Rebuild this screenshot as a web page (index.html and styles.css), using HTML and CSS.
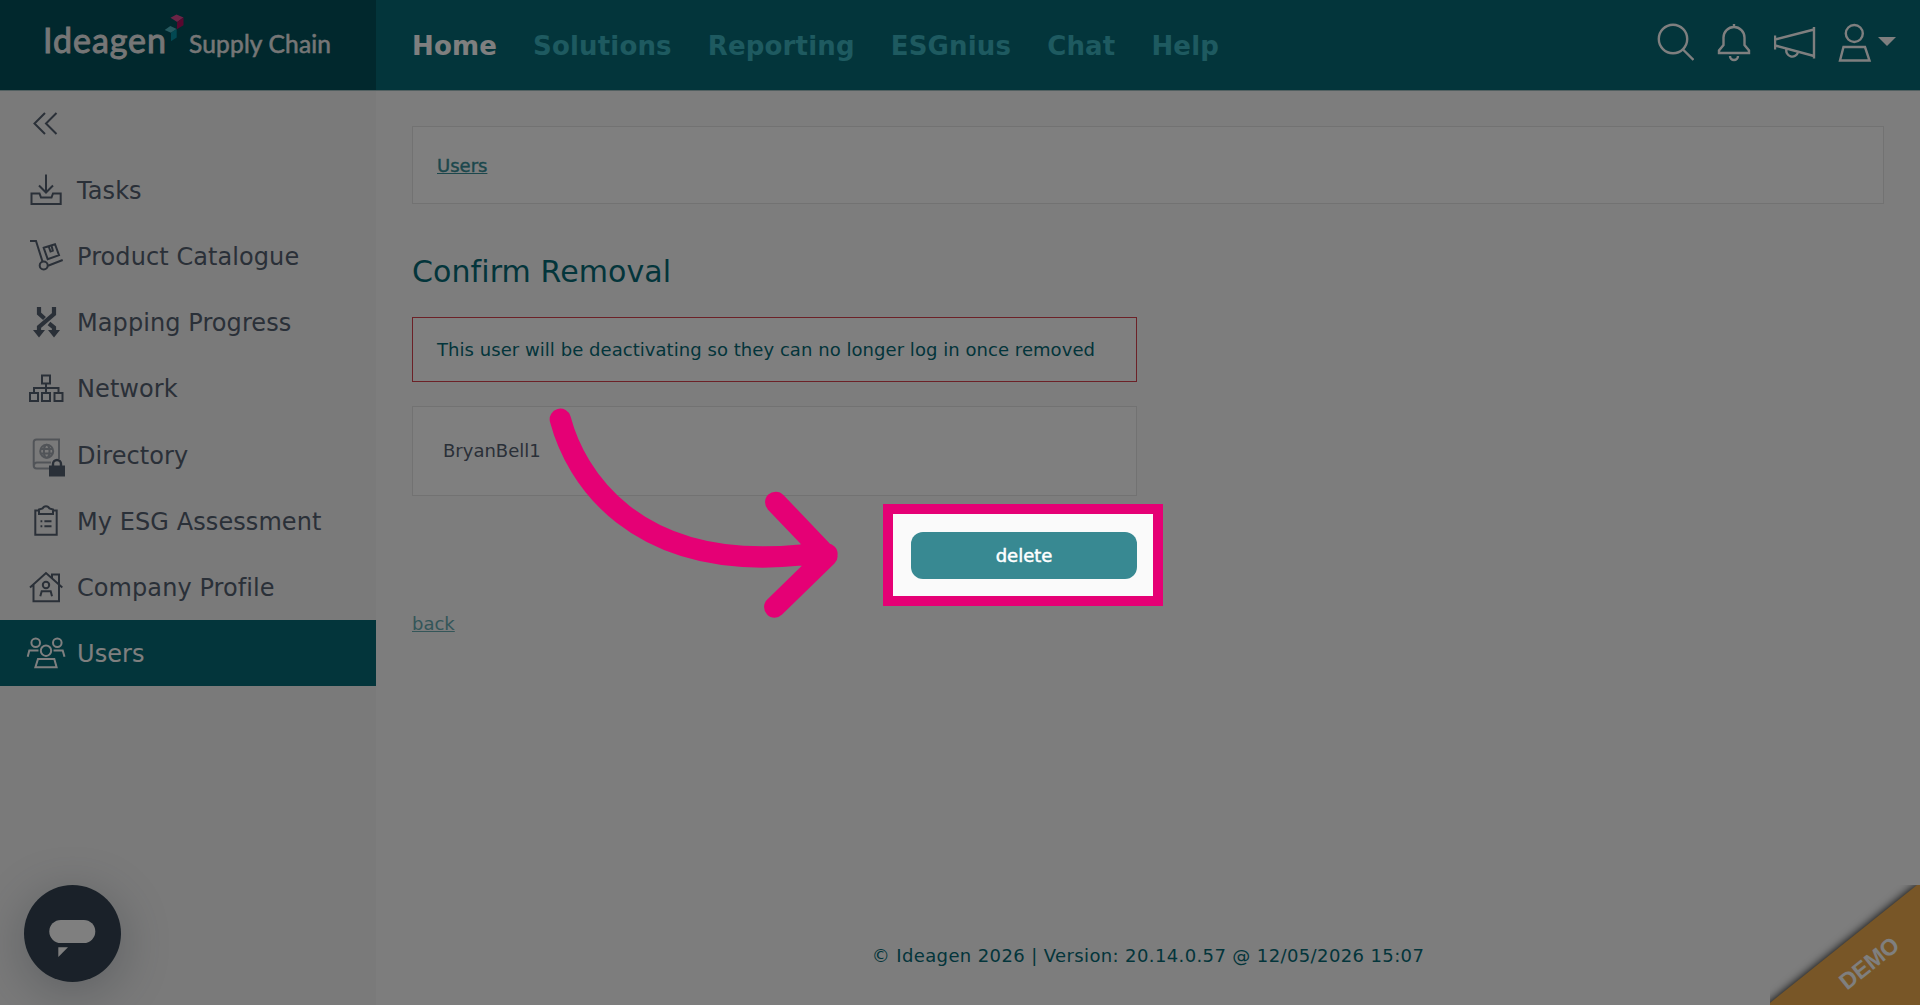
FILE: index.html
```html
<!DOCTYPE html>
<html lang="en">
<head>
    <meta charset="UTF-8">
    <meta name="viewport" content="width=device-width, initial-scale=1.0">
    <title>Confirm Removal</title>
    <link rel="stylesheet" href="styles.css">
</head>
<body>
    <header class="header">
        <a class="logo">
            <svg width="376" height="90" viewBox="0 0 376 90">
                <text class="logo-main" x="43" y="53" textLength="123">Ideagen</text>
                <text class="logo-sub" x="189" y="53" textLength="142">Supply Chain</text>
                <path fill="#d8488c" d="M170.500 17.700L176.500 14.500L183.500 17.500L177.200 22z"/>
                <path fill="#b0105f" d="M177.200 22L183.500 17.500V25.300L176.800 29.300z"/>
                <path fill="#4fb4c0" d="M164.700 30L170.300 26L176.700 29L171 32.700z"/>
                <path fill="#0590a4" d="M171 32.700L176.700 29V37.500L171 41.300z"/>
            </svg>
        </a>
        <nav class="nav">
            <a class="active">Home</a>
            <a>Solutions</a>
            <a>Reporting</a>
            <a>ESGnius</a>
            <a>Chat</a>
            <a>Help</a>
        </nav>
        <div class="tools">
            <svg width="40" height="40" viewBox="0 0 40 40"><circle cx="19" cy="17" r="14.200"/><path d="M29 27.500L39.500 38"/></svg>
            <svg width="40" height="40" viewBox="0 0 40 40"><path d="M20 2v4M5 31v-2.500l4.500-5.500v-7.500a10.500 10.500 0 0 1 21 0V23l4.500 5.500V31zM16 34a4 4 0 0 0 8 0"/></svg>
            <svg width="42" height="40" viewBox="0 0 42 40"><path d="M1 13.500v14M40 5v31.500M1 17.500L40 7.500M1 23.500L40 34M12.500 27a5.600 5.600 0 0 0 11.500 3.200"/></svg>
            <svg width="36" height="40" viewBox="0 0 36 40"><circle cx="18.300" cy="11.500" r="8.500"/><path d="M7.500 25h21.500l4.500 13.500H4z"/></svg>
            <svg class="caret" width="18" height="40" viewBox="0 0 18 40"><path d="M0 15h18l-9 9z"/></svg>
        </div>
    </header>

    <div class="page">
        <aside class="sidebar">
            <a class="item collapse">
                <svg viewBox="0 0 44 44"><path d="M21 11L10.500 21.500L21 32M32.500 11L22 21.500L32.500 32"/></svg>
            </a>
            <a class="item">
                <svg viewBox="0 0 44 44"><path d="M22 7.500V25M15 18.500L22 25.500L29 18.500M7.500 26.500H15.500L17 30.500H27.500L29 26.500H36.700V37H7.500z"/></svg>
                <span>Tasks</span>
            </a>
            <a class="item">
                <svg viewBox="0 0 44 44"><path d="M6 8H12L18.500 28.500M24 32.700L38.700 27M19.700 14.800L31 11.200L35 22.200L23.700 26.200zM24.700 13.500L26.500 18.500L28.800 17.600L27.500 12.500"/><circle cx="19.700" cy="32.500" r="4"/></svg>
                <span>Product Catalogue</span>
            </a>
            <a class="item">
                <svg viewBox="0 0 44 44"><path class="strand" d="M15 7V13.500L20.500 18.500M25 23.500L30 27.500V32M30 7V14L15 27V32"/><path class="solid" d="M9 30H21L15 37.500zM24 30H36L30 37.500z"/></svg>
                <span>Mapping Progress</span>
            </a>
            <a class="item">
                <svg viewBox="0 0 44 44"><path d="M18 9.500h8v8h-8zM6 27h8v8H6zM18 27h8v8h-8zM30.500 27h8v8h-8zM22 17.500V27M10 27V22H34.500V27"/></svg>
                <span>Network</span>
            </a>
            <a class="item">
                <svg viewBox="0 0 44 44">
                    <g class="faded"><path d="M35 27V7.500H12.500a2.800 2.800 0 0 0-2.800 2.800V33.500a3 3 0 0 0 3 3H25M10 33.500a3 3 0 0 1 3-3H27"/><circle cx="22.700" cy="19.200" r="6.500"/><ellipse cx="22.700" cy="19.200" rx="2.800" ry="6.500"/><path d="M17 17h11.500M17 21.500h11.500"/></g>
                    <path class="solid" d="M25 33.500h16v11H25z"/><path class="shackle" d="M29 34v-2a4 4 0 0 1 8 0v2"/>
                </svg>
                <span>Directory</span>
            </a>
            <a class="item">
                <svg viewBox="0 0 44 44"><path d="M15 12.500H11.300V36.700H32.700V12.500H29M15 16V11.500L18.500 10.500A3.800 3.800 0 0 1 25.500 10.500L29 11.500V16zM20.400 23.200H27.500M20.400 28.200H27.500M16.500 23.200H18.300M16.500 28.200H18.300"/></svg>
                <span>My ESG Assessment</span>
            </a>
            <a class="item">
                <svg viewBox="0 0 44 44"><path d="M6 22.500L22 8L38.300 22.500M9.500 20V36.300H35V20M28 13V9.500H35V19M16.300 31.300L17.700 26.300H26.700L28 31.300"/><circle cx="22" cy="20" r="3.200"/></svg>
                <span>Company Profile</span>
            </a>
            <a class="item selected">
                <svg viewBox="0 0 44 44"><circle cx="11.700" cy="11.700" r="4.300"/><circle cx="33.300" cy="11.700" r="4.300"/><circle cx="22" cy="19.700" r="5.200"/><path d="M3.700 25.700L5.300 19.500H14.500M29.500 19.500H38.700L40.500 25.700M14 28H30.300L32.600 36.300H11.400z"/></svg>
                <span>Users</span>
            </a>
        </aside>

        <main class="content">
            <div class="breadcrumb"><a class="link">Users</a></div>
            <h1>Confirm Removal</h1>
            <div class="form">
                <div class="warning">This user will be deactivating so they can no longer log in once removed</div>
                <div class="panel">BryanBell1</div>
                <div class="actions">
                    <div class="target">
                        <button class="delete">delete</button>
                        <div class="spotlight"></div>
                    </div>
                </div>
            </div>
            <a class="link back">back</a>
            <footer>© Ideagen 2026 | Version: 20.14.0.57 @ 12/05/2026 15:07</footer>
        </main>
    </div>

    <div class="chat">
        <svg width="97" height="97" viewBox="0 0 97 97"><rect x="25.300" y="35" width="46" height="23" rx="11.500"/><path d="M34.300 62.300h9.700l-9.700 9.700z"/></svg>
    </div>
    <div class="demo">
        <svg width="150" height="120" viewBox="0 0 150 120"><path d="M-30 142L147 0H180V150H-30z"/></svg>
        <span>DEMO</span>
    </div>

    <svg class="arrow" width="310" height="220" viewBox="545 405 310 220">
        <path d="M560.300 419.300C575 475 633 572 801 555L827 554M775.700 502.300L827 556L774.700 607"/>
    </svg>
</body>
</html>
```

FILE: styles.css
```css
* {
    box-sizing: border-box;
}

body {
    margin: 0;
    height: 1005px;
    overflow: hidden;
    position: relative;
    display: flex;
    flex-direction: column;
    font-family: Verdana, "DejaVu Sans", sans-serif;
    font-size: 18px;
    color: #556070;
    background-color: #fafafa;
}

svg {
    display: block;
    fill: none;
    flex-shrink: 0;
}

.header {
    display: flex;
    height: 90px;
    background-color: #066a76;
}

.logo {
    width: 376px;
    background-color: #02505a;
}

.logo text {
    font-family: Lato, sans-serif;
    fill: #ededed;
    stroke: #ededed;
    stroke-width: 0.5;
}

.logo .logo-main {
    font-size: 34px;
    stroke-width: 0.9;
}

.logo-sub {
    font-size: 24.5px;
}

.nav {
    display: flex;
    align-items: center;
    gap: 36px;
    padding: 2px 0 0 36px;
    font-size: 26px;
    font-weight: bold;
    letter-spacing: 0.17px;
    color: #3cb4c0;
}

.nav .active {
    color: #fff;
}

.tools {
    display: flex;
    gap: 20px;
    margin: 22px 24px 0 auto;
    stroke: #fff;
    stroke-width: 2.4;
}

.tools .caret {
    margin-left: -14px;
    fill: #fff;
    stroke: none;
}

.page {
    display: flex;
    flex: 1;
}

.sidebar {
    width: 376px;
    background-color: #f4f4f4;
    border-top: 1px solid #a5c0c3;
}

.item {
    display: flex;
    align-items: center;
    height: 66.25px;
    padding-left: 24px;
    gap: 9px;
    font-size: 24px;
    letter-spacing: 0.08px;
    stroke: #556070;
    stroke-width: 2;
}

.item.collapse {
    height: 65px;
}

.item span {
    padding-top: 3px;
    stroke: none;
}

.item svg {
    width: 44px;
    height: 44px;
    overflow: visible;
}

.item .strand {
    stroke-width: 4.2;
}

.item .solid {
    fill: #556070;
    stroke: none;
}

.item .shackle {
    stroke-width: 2.4;
}

.item .faded {
    opacity: 0.5;
}

.item.selected {
    background-color: #066a76;
    color: #fff;
    stroke: #fff;
}

.content {
    flex: 1;
    display: flex;
    flex-direction: column;
    align-items: flex-start;
    padding: 35px 36px 0;
    border-top: 1px solid #a5c0c3;
}

.breadcrumb {
    width: 100%;
    height: 78px;
    padding: 0 24px;
    line-height: 77px;
    border: 1px solid #e4e4e4;
    background-color: #fff;
}

.link {
    color: #388f99;
    text-decoration: underline;
}

.breadcrumb .link {
    -webkit-text-stroke: 0.4px;
}

h1 {
    margin: 50px 0 0;
    font-size: 30px;
    line-height: 36px;
    font-weight: normal;
    letter-spacing: 0.1px;
    color: #066a76;
}

.form {
    width: 725px;
    margin-top: 27px;
}

.warning {
    height: 65px;
    padding-left: 24px;
    line-height: 63px;
    letter-spacing: 0.05px;
    border: 1px solid #d9434e;
    background-color: #fff;
    color: #066a76;
    white-space: nowrap;
}

.panel {
    height: 90px;
    margin-top: 24px;
    padding-left: 30px;
    line-height: 88px;
    border: 1px solid #e4e4e4;
    background-color: #fff;
}

.actions {
    display: flex;
    justify-content: flex-end;
    margin-top: 36px;
}

.target {
    position: relative;
}

.delete {
    display: block;
    width: 226px;
    height: 47px;
    border: none;
    border-radius: 12px;
    background-color: #388992;
    color: #fff;
    font: 18px Verdana, "DejaVu Sans", sans-serif;
    -webkit-text-stroke: 0.5px;
}

/* the shadow dims everything outside the frame */
.spotlight {
    position: absolute;
    inset: -28px -26px -27px -28px;
    z-index: 10;
    border: 10px solid #e50075;
    box-shadow: 0 0 0 2000px rgba(0, 0, 0, 0.5);
}

.back {
    margin-top: 34px;
    color: #68acb3;
}

footer {
    align-self: center;
    margin: auto 0 39px;
    letter-spacing: 0.38px;
    color: #066a76;
}

.chat {
    position: absolute;
    left: 24px;
    bottom: 23.5px;
    width: 97px;
    height: 97px;
    border-radius: 50%;
    background-color: #344352;
    box-shadow: 0 10px 50px rgba(52, 67, 82, 0.3);
}

.chat svg {
    fill: #fff;
}

.demo {
    position: absolute;
    right: 0;
    bottom: 0;
    width: 150px;
    height: 120px;
}

.demo path {
    fill: #f0ad4e;
    filter: drop-shadow(0 0 5px #000);
}

.demo span {
    position: absolute;
    left: 64px;
    top: 63px;
    width: 70px;
    line-height: 30px;
    text-align: center;
    transform: rotate(-38.5deg);
    font-family: "Liberation Sans", Arial, sans-serif;
    font-size: 23px;
    font-weight: bold;
    color: #fff;
}

.arrow {
    position: absolute;
    left: 545px;
    top: 405px;
    z-index: 11;
    stroke: #e50075;
    stroke-width: 21.3;
    stroke-linecap: round;
    stroke-linejoin: round;
}
```
